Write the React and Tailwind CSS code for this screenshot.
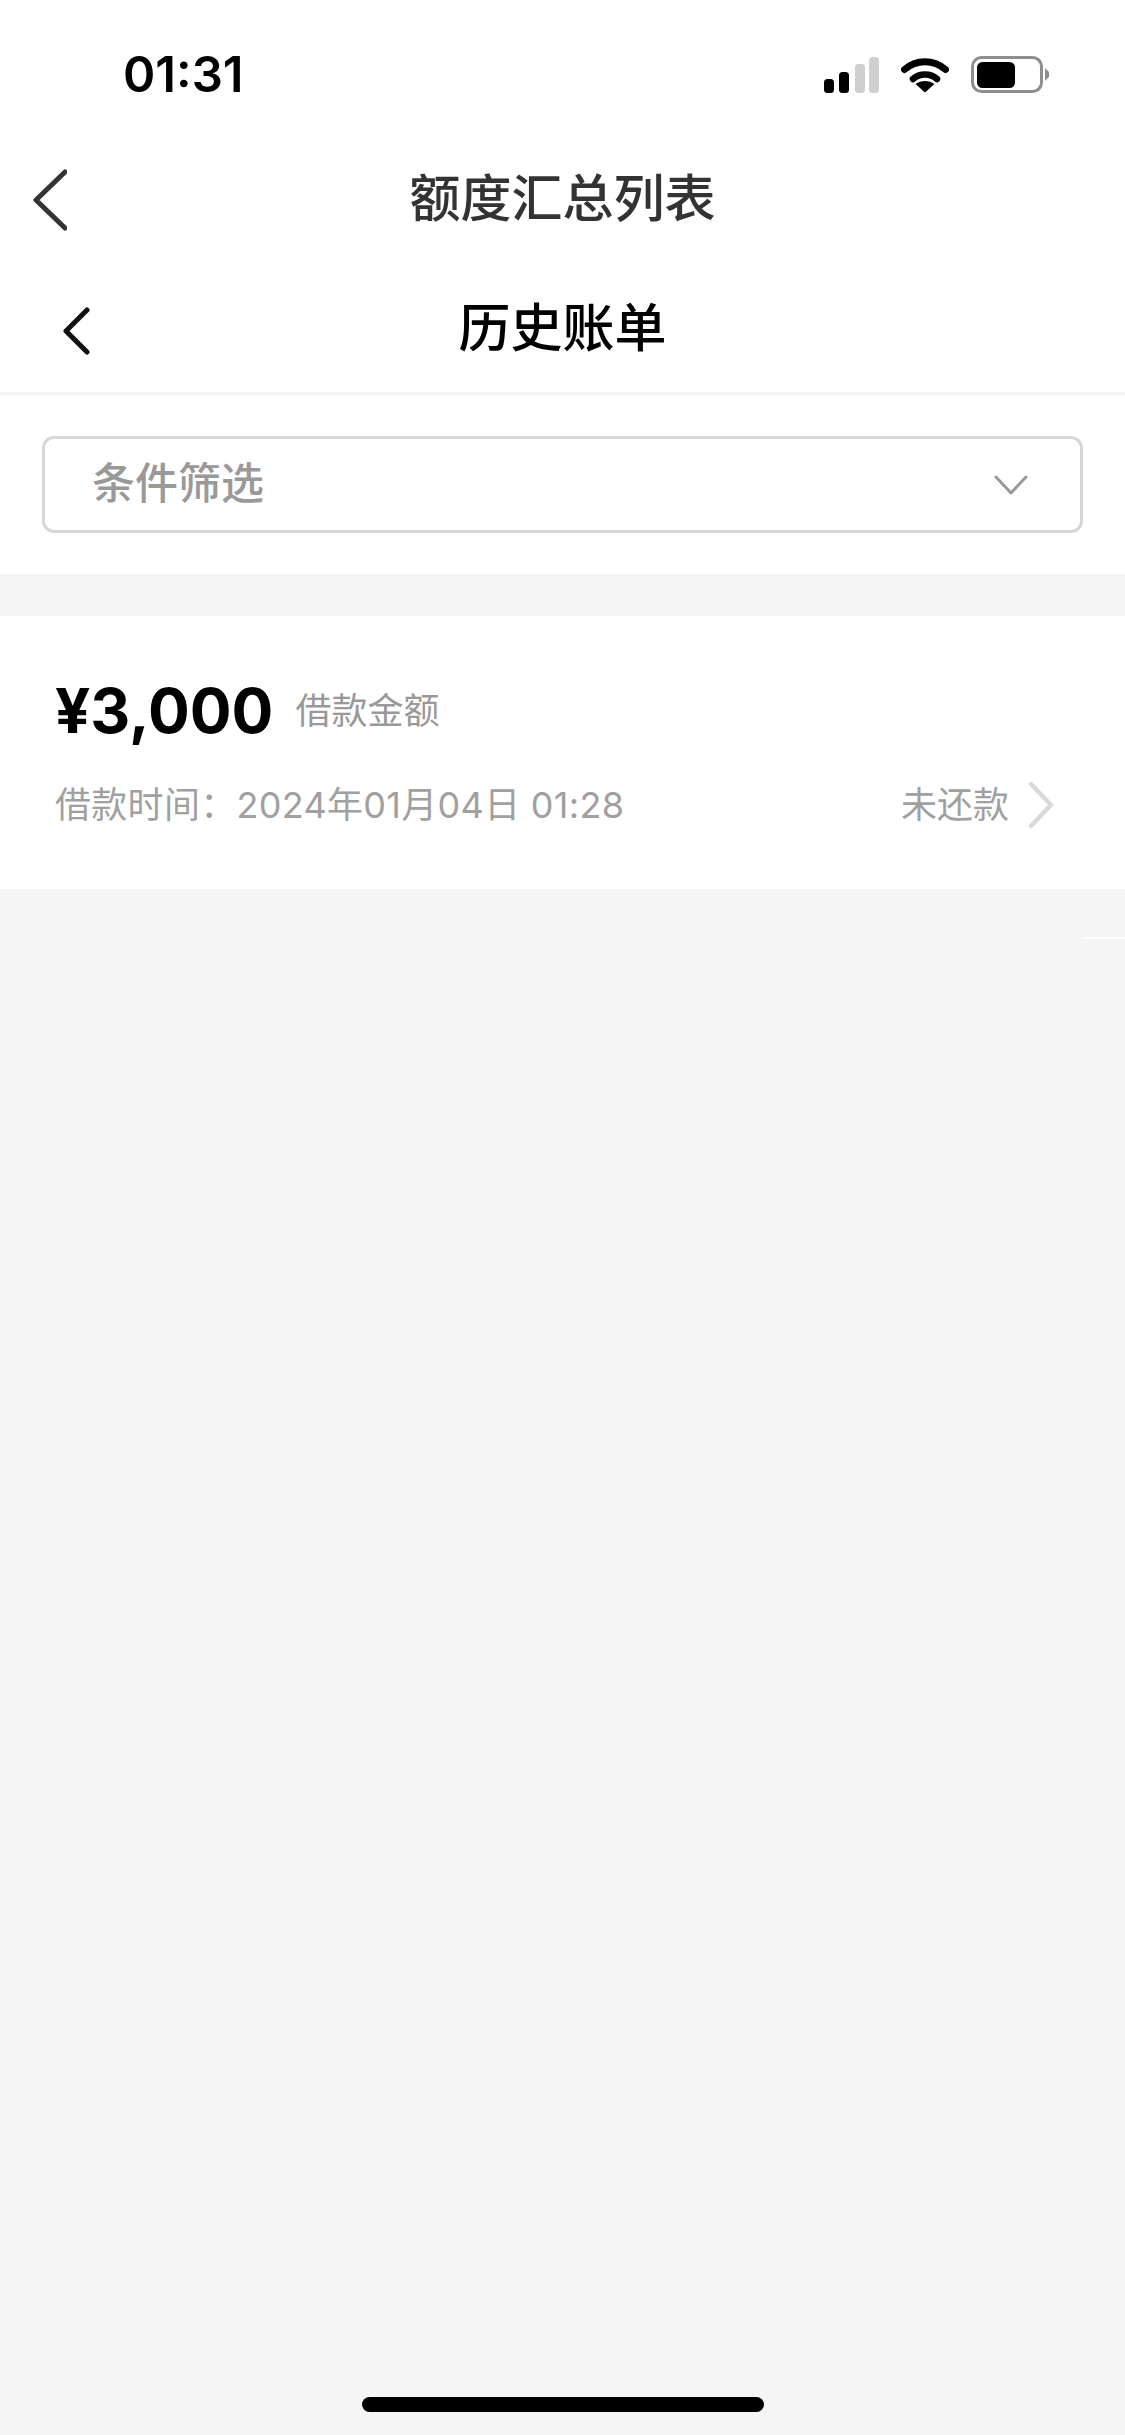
const Chevron = ({ className, points, width, height, stroke, strokeWidth }) => (
  <svg className={className} width={width} height={height} viewBox={`0 0 ${width} ${height}`} fill="none">
    <polyline points={points} stroke={stroke} strokeWidth={strokeWidth} strokeLinecap="round" strokeLinejoin="round" />
  </svg>
);

const StatusIcons = () => (
  <div className="flex items-end gap-[22px]">
    <svg width="57" height="36" viewBox="0 0 57 36">
      <rect x="2" y="22" width="10" height="14" rx="3.5" fill="#000" />
      <rect x="17" y="15" width="10" height="21" rx="3.5" fill="#000" />
      <rect x="33" y="7" width="10" height="29" rx="3.5" fill="#cfcfcf" />
      <rect x="47" y="0" width="10" height="36" rx="3.5" fill="#cfcfcf" />
    </svg>
    <svg width="48" height="36" viewBox="0 0 48 36" fill="none">
      <path d="M3.5 12.5C15 2 33 2 44.5 12.5" stroke="#000" strokeWidth="7" strokeLinecap="round" />
      <path d="M12 22C18.5 16 29.5 16 36 22" stroke="#000" strokeWidth="6.5" strokeLinecap="round" />
      <path d="M24 35.5L14.5 27C20 23 28 23 33.5 27Z" fill="#000" />
    </svg>
    <svg width="79" height="37" viewBox="0 0 79 37">
      <rect x="1.5" y="1.5" width="69" height="34" rx="9" fill="none" stroke="#8e8e8e" strokeWidth="3" />
      <rect x="6" y="6" width="38" height="26" rx="5.5" fill="#000" />
      <path d="M74 12L78 16V21L74 25Z" fill="#8e8e8e" />
    </svg>
  </div>
);

export default function App() {
  return (
    <div className="relative min-h-[2435px] w-[1125px] bg-[#f5f5f5] font-['Inter','Noto_Sans_CJK_SC',sans-serif]">
      {/* 状态栏 */}
      <div className="flex h-[135px] items-start justify-between bg-white pt-[46px] pl-[123px] pr-[75px]">
        <span className="text-[49px] leading-[58px] font-semibold text-black">01:31</span>
        <div className="pt-[10px]">
          <StatusIcons />
        </div>
      </div>

      {/* 导航 */}
      <div className="relative flex h-[128px] items-center justify-center bg-white">
        <Chevron className="absolute left-[33px] top-[34px]" width={34} height={62} points="32,3 3,31 32,59" stroke="#333" strokeWidth={5} />
        <h1 className="text-[51px] font-medium text-[#333]">额度汇总列表</h1>
      </div>
      <div className="relative flex h-[132px] items-center justify-center border-b-[3px] border-[#f2f2f2] bg-white">
        <Chevron className="absolute left-[62px] top-[44px]" width={28} height={48} points="25,3 4,24 25,45" stroke="#111" strokeWidth={5} />
        <h2 className="pt-[3px] text-[52px] font-medium text-black">历史账单</h2>
      </div>

      {/* 筛选 */}
      <div className="bg-white px-[42px] pt-[41px] pb-[41px]">
        <div className="flex h-[97px] items-center justify-between rounded-[12px] border-[3px] border-[#d6d6d6] pl-[47px] pr-[52px]">
          <span className="pb-[3px] text-[43px] font-medium text-[#999]">条件筛选</span>
          <Chevron width={34} height={20} points="2,2 17,18 32,2" stroke="#999" strokeWidth={3} />
        </div>
      </div>

      {/* 账单 */}
      <div className="mt-[42px] flex h-[273px] flex-col bg-white px-[55px] pt-[57px]">
        <div className="flex items-center gap-[22px]">
          <span className="text-[62px] leading-[76px] font-bold text-black">¥3,000</span>
          <span className="text-[36px] text-[#999]">借款金额</span>
        </div>
        <div className="mt-[31px] flex items-center justify-between">
          <span className="text-[36px] leading-[50px] tracking-[0.3px] text-[#a0a0a0]">借款时间：2024年01月04日 01:28</span>
          <div className="flex items-center gap-[19px] pr-[16px]">
            <span className="text-[36px] leading-[50px] text-[#a0a0a0]">未还款</span>
            <Chevron width={26} height={46} points="3,2 23,23 3,44" stroke="#d9d9d9" strokeWidth={4.5} />
          </div>
        </div>
      </div>

      <div className="absolute left-[1083px] top-[937px] h-[2px] w-[42px] bg-white" />

      <div className="absolute bottom-[23px] left-[362px] h-[15px] w-[402px] rounded-full bg-black" />
    </div>
  );
}
